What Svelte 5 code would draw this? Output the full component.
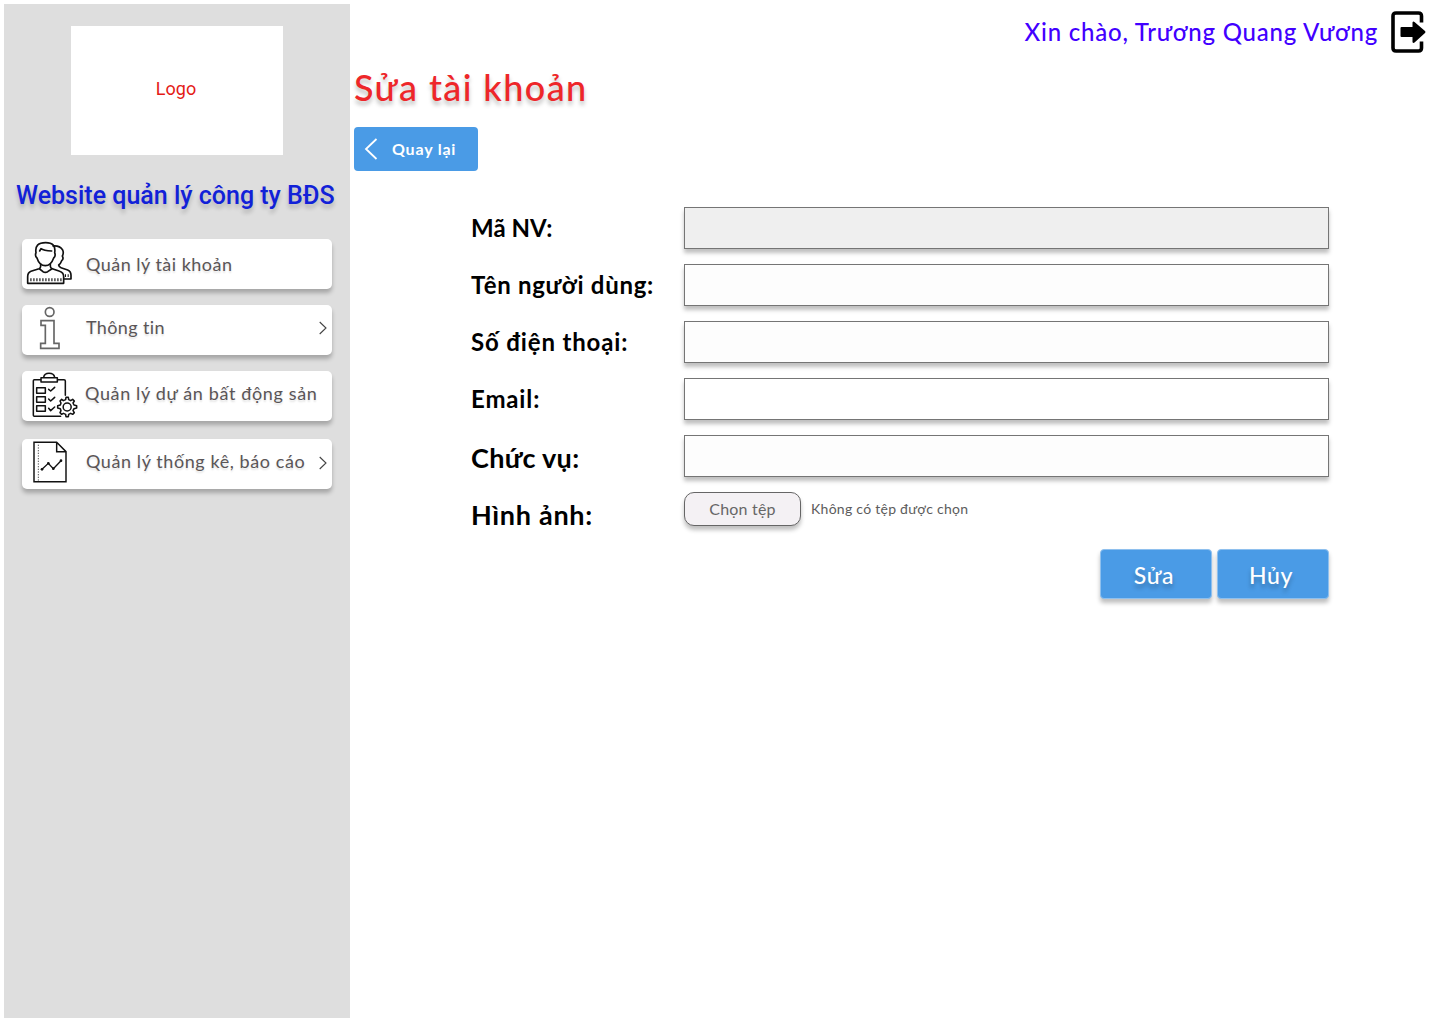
<script>
  const menu = [
    { icon: 'users', label: 'Quản lý tài khoản', arrow: false },
    { icon: 'info', label: 'Thông tin', arrow: true },
    { icon: 'project', label: 'Quản lý dự án bất động sản', arrow: false },
    { icon: 'report', label: 'Quản lý thống kê, báo cáo', arrow: true },
  ];

  const fields = [
    { key: 'code', label: 'Mã NV:', disabled: true },
    { key: 'fullname', label: 'Tên người dùng:', disabled: false },
    { key: 'phone', label: 'Số điện thoại:', disabled: false },
    { key: 'email', label: 'Email:', disabled: false },
    { key: 'role', label: 'Chức vụ:', disabled: false },
  ];
</script>

<div class="page">
  <aside class="sidebar">
    <div class="logo">Logo</div>
    <h2 class="brand">Website quản lý công ty BĐS</h2>
    <nav class="menu">
      {#each menu as item}
        <a class="item {item.icon}" href="#top">
          {#if item.icon === 'users'}
            <svg class="icon" viewBox="21 27 180 150" fill="none" stroke="#111" stroke-width="5" stroke-linecap="round" stroke-linejoin="round">
              <path d="M66 84Q59 78 63 68Q58 38 92 38Q124 38 119 68Q123 78 116 84Q108 107 91 107Q73 107 66 84Z" />
              <path d="M77 103V109Q77 114 72 116L48 124Q38 128 38 140V160H146V140Q146 128 134 124L112 116Q106 114 106 109V103" />
              <path d="M74 63L78 56Q86 62 110 63" />
              <path d="M74 117L84 125Q91 129 98 125L110 117" />
              <path d="M114 48Q134 46 143 60Q147 70 142 78Q147 87 140 92Q137 101 131 105Q132 111 138 113L158 120Q168 124 168 136V147H148" />
              <path d="M46 149H142" stroke-width="9" stroke-dasharray="3.500 5.500" stroke-linecap="butt" />
              <path d="M150 137H163" stroke-width="8" stroke-dasharray="3 5" stroke-linecap="butt" />
            </svg>
          {:else if item.icon === 'info'}
            <svg class="icon" viewBox="21 225 180 150" fill="none" stroke="#666" stroke-width="5">
              <circle cx="104" cy="246" r="13" />
              <path d="M78 272H117V340H132V355H77V340H91V286H78Z" />
            </svg>
          {:else if item.icon === 'project'}
            <svg class="icon" viewBox="21 33 180 150" fill="none" stroke="#111" stroke-width="4.600" stroke-linecap="round" stroke-linejoin="round">
              <path d="M77 59H58Q55 59 55 62V166Q55 169 58 169H137M128 59H147Q151 59 151 63V106" />
              <path d="M78 53H127V66H78Z" />
              <path d="M86 52Q88 40 102 40Q117 40 119 52" />
              <path d="M65 83H91V100H65ZM65 110H91V127H65ZM65 137H91V154H65Z" />
              <path d="M101 88L107 93L119 82M101 117L107 123L119 112M101 145L107 152L119 141" />
              <path d="M152 119L153 112H160L161 119L167 122L173 118L178 123L174 129L177 135L185 137V144L177 146L174 152L178 158L173 163L167 160L161 163L160 170H153L152 163L145 160L140 163L135 158L138 152L136 146L128 144V137L136 135L138 129L135 123L140 118L145 122Z" />
              <circle cx="156.500" cy="141" r="12" />
            </svg>
          {:else}
            <svg class="icon" viewBox="21 237 180 150" fill="none" stroke="#111" stroke-width="4.400">
              <path d="M57 247H125L153 275V365H57ZM125 247V275H153" />
              <path d="M70 254V362" stroke="#555" stroke-width="3" stroke-dasharray="4 4" />
              <path d="M81 328L100 310L115 326L138 302" stroke-width="4" />
              <g fill="#111" stroke="none">
                <circle cx="81" cy="328" r="4" /><circle cx="100" cy="310" r="4" /><circle cx="115" cy="326" r="4" /><circle cx="138" cy="302" r="4" />
              </g>
            </svg>
          {/if}
          <span class="text">{item.label}</span>
          {#if item.arrow}
            <svg class="arrow" viewBox="0 0 8 14" fill="none" stroke="#444" stroke-width="1.100"><path d="M0.700 1L7 7L0.700 13" /></svg>
          {/if}
        </a>
      {/each}
    </nav>
  </aside>

  <main class="main">
    <header class="topbar">
      <span class="hello">Xin chào, Trương Quang Vương</span>
      <svg class="logout" viewBox="0 0 36 42">
        <path d="M30.500 11.500V5Q30.500 2 27.500 2H5Q2 2 2 5V37Q2 40 5 40H27.500Q30.500 40 30.500 37V30.500" fill="none" stroke="#000" stroke-width="3.600" />
        <path d="M10.500 16H21.500V11.500Q22 10 23.500 11L34 20Q35 21 34 22L23.500 31.500Q22 32.500 21.500 31V26H10.500Q9.500 26 9.500 25V17Q9.500 16 10.500 16Z" />
      </svg>
    </header>

    <h1 class="title">Sửa tài khoản</h1>

    <button class="back">
      <svg viewBox="0 0 14 22" fill="none" stroke="#fff" stroke-width="1.800"><path d="M12.500 1L2 11L12.500 21" /></svg>
      <span>Quay lại</span>
    </button>

    <form class="form">
      {#each fields as f}
        <label class="row {f.key}">
          <span class="caption">{f.label}</span>
          <input type="text" disabled={f.disabled} />
        </label>
      {/each}
      <div class="row image">
        <span class="caption">Hình ảnh:</span>
        <button type="button" class="choose">Chọn tệp</button>
        <span class="nofile">Không có tệp được chọn</span>
      </div>
      <div class="actions">
        <button type="button">Sửa</button>
        <button type="button">Hủy</button>
      </div>
    </form>
  </main>
</div>

<style>
  :global(body) { margin: 0; background: #fff; }
  * { box-sizing: border-box; }
  .page {
    display: flex; gap: 4px; width: 1440px; height: 1024px; padding: 4px 0 6px 4px; overflow: hidden;
    font-family: Lato, "Noto Sans", sans-serif; white-space: nowrap;
  }
  .sidebar { width: 346px; flex: none; background: #dedede; padding-top: 22px; }
  .logo {
    width: 212px; height: 129px; margin-left: 67px; background: #fff; color: #e41b17;
    display: flex; align-items: center; justify-content: center;
    font: 18px/20px Roboto, sans-serif; padding: 0 2px 3px 0;
  }
  .brand {
    margin: 25px 0 0 12px; height: 32px; color: #1121d8; font: 500 25px/32px Roboto, sans-serif;
    text-shadow: 0 4px 4px rgba(0, 0, 0, .2);
  }
  .menu { display: flex; flex-direction: column; gap: 16px; margin: 27px 18px 0; }
  .item {
    display: flex; align-items: center; height: 50px; background: #fff; border-radius: 5px;
    box-shadow: 0 4px 4px rgba(0, 0, 0, .25); color: #5a5557; text-decoration: none; font-size: 18px;
    letter-spacing: .48px;
  }
  .item.info { letter-spacing: .36px; }
  .item.project { letter-spacing: .64px; }
  .item.report { margin-top: 2px; letter-spacing: .58px; }
  .icon { width: 60px; height: 50px; flex: none; }
  .text { flex: 1; margin-left: 4px; line-height: 24px; text-shadow: 0 2px 2px rgba(0, 0, 0, .12); }
  .info .text, .project .text, .report .text { padding-bottom: 6px; }
  .project .text { margin-left: 3px; }
  .arrow { width: 8px; height: 14px; margin: 0 5px 4px 0; }
  .report .arrow { margin-bottom: 2px; }
  .main { flex: 1; display: flex; flex-direction: column; align-items: flex-start; }
  .topbar { align-self: flex-end; display: flex; align-items: center; height: 56px; padding-right: 13px; gap: 13px; }
  .hello { color: #4200ff; font-size: 24px; line-height: 30px; font-weight: 500; letter-spacing: .78px; }
  .logout { width: 36px; height: 42px; }
  .title {
    margin: 4px 0 0; height: 46px; color: #ee2629; font-size: 36px; line-height: 46px; font-weight: 500;
    letter-spacing: 1.4px; text-shadow: 0 4px 4px rgba(0, 0, 0, .25);
  }
  button { border: 0; padding: 0; font-family: inherit; color: #fff; }
  .back {
    display: flex; align-items: center; gap: 14px; width: 124px; height: 44px; margin-top: 17px; padding-left: 10px;
    background: #4a9be6; border-radius: 4px; font-size: 16px; font-weight: 700; letter-spacing: .8px;
  }
  .back span { padding-bottom: 2px; }
  .back svg { width: 14px; height: 22px; }
  .form { margin: 36px 0 0 117px; width: 858px; display: flex; flex-direction: column; gap: 15px; }
  .row { display: flex; height: 42px; }
  .caption { flex: none; width: 213px; font-size: 24px; line-height: 42px; font-weight: 700; color: #000; letter-spacing: .7px; }
  .code .caption { letter-spacing: .05px; }
  .phone .caption, .email .caption { letter-spacing: .85px; }
  .role .caption, .image .caption { font-size: 27px; line-height: 46px; }
  .role .caption { letter-spacing: .3px; }
  input {
    flex: 1; min-width: 0; height: 42px; border: 1px solid #757575; border-radius: 0; background: #fdfdfd;
    box-shadow: 0 4px 4px rgba(0, 0, 0, .25); padding: 0 10px; font: inherit;
  }
  .email input { background: #fff; }
  input:disabled { background: #efefef; }
  .choose {
    width: 117px; height: 34px; border: 1px solid #666; border-radius: 10px; background: #f4f1f4; color: #666;
    font-size: 16px; letter-spacing: .2px; box-shadow: 0 4px 4px rgba(0, 0, 0, .25); padding-bottom: 2px;
  }
  .nofile { margin-left: 10px; line-height: 34px; font-size: 14px; color: #5c5c5c; letter-spacing: .27px; }
  .actions { display: flex; justify-content: flex-end; gap: 5px; padding-right: .5px; }
  .actions button {
    width: 112px; height: 50px; background: #4a9be6; border: 1px solid #8fc0ee; border-radius: 4px; font-size: 23px; font-weight: 500;
    letter-spacing: .6px; padding: 2px 3px 0 0;
    box-shadow: 0 4px 4px rgba(0, 0, 0, .25); text-shadow: 0 4px 4px rgba(0, 0, 0, .25);
  }
</style>
